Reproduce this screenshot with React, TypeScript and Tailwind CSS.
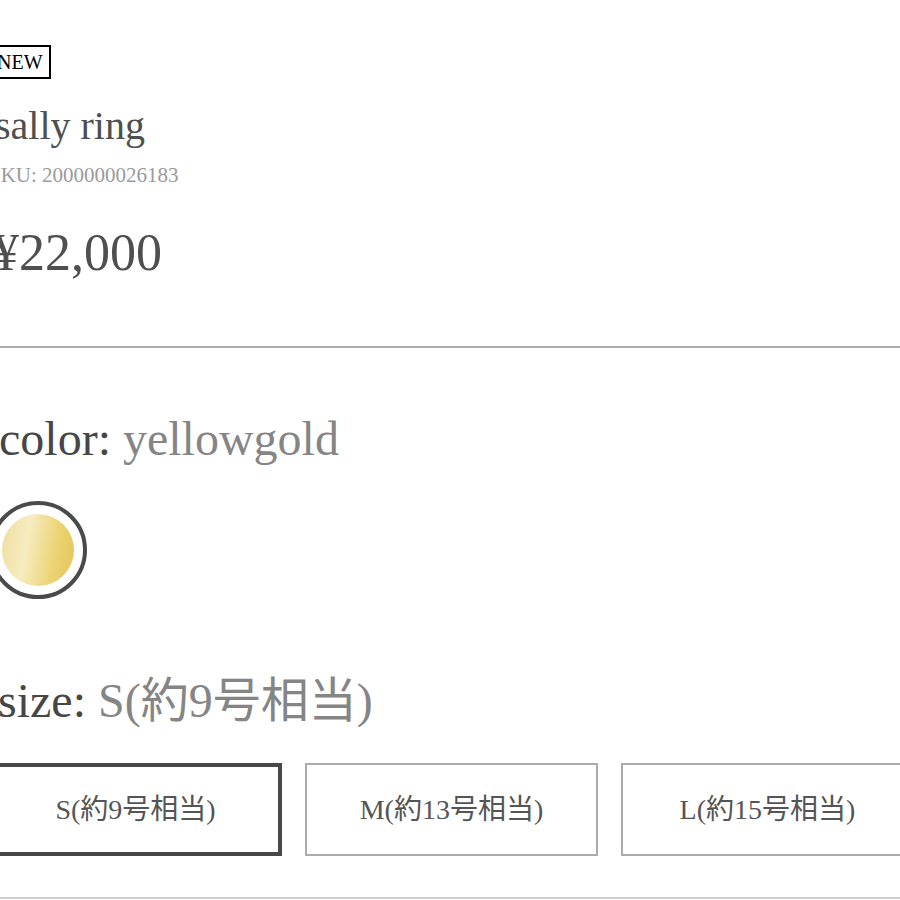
import React from "react";

const serif = "font-['Liberation_Serif','Noto_Sans_CJK_JP',serif]";

function SizeButton({ label, selected }: { label: string; selected?: boolean }) {
  return (
    <div
      className={
        "flex h-[93px] w-[293px] items-center justify-center bg-white text-[28px] leading-none text-[#555] " +
        (selected ? "border-4 border-[#484848]" : "border-2 border-[#ababab]")
      }
    >
      {label}
    </div>
  );
}

export default function App() {
  return (
    <div className={"h-[900px] w-[900px] overflow-hidden bg-white " + serif}>
      <div className="-ml-[11px] w-[925px]">
        <div className="pt-[45px]">
          <div className="inline-flex h-[34px] items-center border-2 border-black px-[6px] text-[20px] leading-none text-black">
            NEW
          </div>
        </div>
        <div className="mt-[27px] pl-[6px] text-[40px] leading-none text-[#4f4f4f]">sally ring</div>
        <div className="mt-[19px] text-[21px] leading-none text-[#9a9a9a]">SKU: 2000000026183</div>
        <div className="mt-[41px] pl-[4px] text-[52px] leading-none text-[#4f4f4f]">¥22,000</div>
        <div className="mt-[67px] ml-[11px] w-[900px] border-t-2 border-[#ababab]" />
        <div className="mt-[67px] pl-[10px] text-[48px] leading-none">
          <span className="text-[#464646]">color: </span>
          <span className="text-[#858585]">yellowgold</span>
        </div>
        <div className="mt-[38px] flex h-[98px] w-[98px] items-center justify-center rounded-full border-4 border-[#4a4a4a]">
          <div className="h-[72px] w-[72px] rounded-full bg-[linear-gradient(100deg,#efdd9c_0%,#f6ecc0_35%,#ecd475_70%,#e2c458_100%)]" />
        </div>
        <div className="mt-[78px] pl-[9px] text-[48px] leading-none">
          <span className="text-[#464646]">size: </span>
          <span className="text-[#858585]">S(約9号相当)</span>
        </div>
        <div className="mt-[38px] flex gap-[23px]">
          <SizeButton label="S(約9号相当)" selected />
          <SizeButton label="M(約13号相当)" />
          <SizeButton label="L(約15号相当)" />
        </div>
        <div className="mt-[41px] ml-[11px] w-[900px] border-t-2 border-[#d0d0d0]" />
      </div>
    </div>
  );
}
